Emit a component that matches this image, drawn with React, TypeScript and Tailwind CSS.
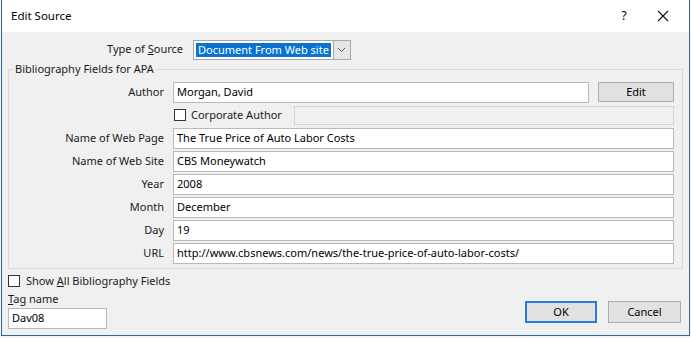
import React from 'react';

const font = { fontFamily: '"Noto Sans", "Open Sans", sans-serif' };

const Field = ({ label, value }: { label: string; value: string }) => (
  <div className="flex items-center h-[23px]">
    <div className="w-[164px] pr-[9px] text-right text-[11px] text-[#1a1a1a]">{label}</div>
    <div className="flex-1 h-[21px] bg-white border border-[#b9b9b9] px-[3px] flex items-center text-[11px] text-black">
      {value}
    </div>
  </div>
);

const Checkbox = () => <div className="w-[12px] h-[12px] border border-[#333] bg-white" />;

export default function App() {
  return (
    <div className="w-[691px] h-[338px] bg-[#f4f4f4] overflow-hidden" style={font}>
      <div className="ml-[1px] w-[689px] h-[336px] border-x border-b border-[#2f6a9e] bg-[#f0f0f0] flex flex-col">
        <div className="h-[32px] bg-white flex items-center pl-[9px] text-[11.5px] text-black">
          <span className="flex-1">Edit Source</span>
          <span className="w-[20px] text-center mr-[23px] text-[12px]">?</span>
          <svg width="12" height="12" viewBox="0 0 12 12" className="mr-[20px]">
            <path d="M1 1L11 11M11 1L1 11" stroke="#111" strokeWidth="1.1" />
          </svg>
        </div>

        <div className="flex items-center mt-[7px] h-[21px]">
          <div className="w-[181px] text-right text-[11px] text-[#1a1a1a]">
            Type of <span className="underline">S</span>ource
          </div>
          <div className="ml-[10px] h-[20px] flex border border-[#a8a8a8] bg-white">
            <div className="m-[2px] px-[2px] bg-[#0a73d0] text-white text-[11px] leading-[14px] flex items-center">
              Document From Web site
            </div>
            <div className="w-[17px] border-l border-[#a8a8a8] bg-[#e6e6e6] flex items-center justify-center">
              <svg width="9" height="6" viewBox="0 0 9 6">
                <path d="M1 1L4.5 4.5L8 1" stroke="#555" strokeWidth="1" fill="none" />
              </svg>
            </div>
          </div>
        </div>

        <fieldset className="mx-[6px] mt-[1px] border border-[#d9d9d9] pl-0 pr-[8px] h-[208px]">
          <legend className="ml-[5px] px-[1px] text-[11px] text-[#1a1a1a]">Bibliography Fields for APA</legend>
          <div className="flex items-center h-[23px] mt-[3px]">
            <div className="w-[164px] pr-[9px] text-right text-[11px] text-[#1a1a1a]">Author</div>
            <div className="w-[416px] h-[21px] bg-white border border-[#b9b9b9] px-[3px] flex items-center text-[11px] text-black">
              Morgan, David
            </div>
            <div className="ml-[9px] flex-1 h-[20px] bg-[#e1e1e1] border border-[#adadad] flex items-center justify-center text-[11px] text-black">
              Edit
            </div>
          </div>
          <div className="flex items-center h-[23px]">
            <div className="w-[165px]" />
            <Checkbox />
            <span className="ml-[5px] text-[11px] text-[#1a1a1a]">Corporate Author</span>
            <div className="ml-[12px] flex-1 h-[19px] bg-[#f0f0f0] border border-[#d4d4d4]" />
          </div>
          <Field label="Name of Web Page" value="The True Price of Auto Labor Costs" />
          <Field label="Name of Web Site" value="CBS Moneywatch" />
          <Field label="Year" value="2008" />
          <Field label="Month" value="December" />
          <Field label="Day" value="19" />
          <Field label="URL" value="http://www.cbsnews.com/news/the-true-price-of-auto-labor-costs/" />
        </fieldset>

        <div className="flex items-end px-[6px] mt-[4px]">
          <div className="flex-1">
            <div className="flex items-center h-[16px]">
              <Checkbox />
              <span className="ml-[6px] text-[11px] text-[#1a1a1a]">
                Show <span className="underline">A</span>ll Bibliography Fields
              </span>
            </div>
            <div className="mt-[2px] text-[11px] text-[#1a1a1a] leading-[16px]">
              <span className="underline">T</span>ag name
            </div>
            <div className="mt-[1px] w-[99px] h-[21px] bg-white border border-[#b9b9b9] px-[3px] flex items-center text-[11px] text-black">
              Dav08
            </div>
          </div>
          <div className="flex gap-[11px] mb-[6px] mr-[2px]">
            <div className="w-[72px] h-[22px] bg-[#e1e1e1] border-2 border-[#2a7bd4] flex items-center justify-center text-[11px] text-black">
              OK
            </div>
            <div className="w-[73px] h-[22px] bg-[#e1e1e1] border border-[#adadad] flex items-center justify-center text-[11px] text-black">
              Cancel
            </div>
          </div>
        </div>
      </div>
    </div>
  );
}
